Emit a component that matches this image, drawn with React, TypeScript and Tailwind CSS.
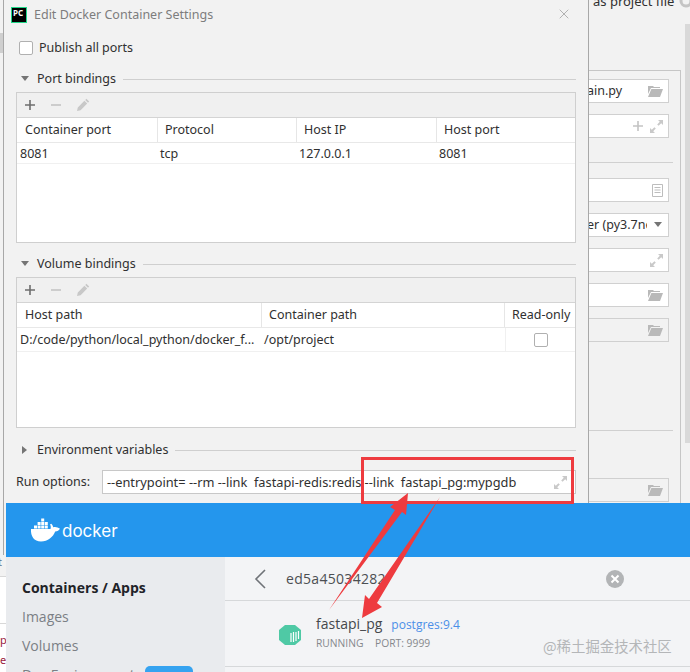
import React from 'react'
import { X } from 'lucide-react'

const PlusIcon = ({ color = '#6e6e6e' }: { color?: string }) => (
    <svg width="12" height="12" viewBox="0 0 12 12"><path d="M1 6h10M6 1v10" stroke={color} strokeWidth="1.6" /></svg>
)

const Toolbar = () => (
    <div className="h-[25px] bg-[#f0f0f0] border-b border-[#d4d4d4] flex items-center pl-[7px] gap-[14px] shrink-0">
        <PlusIcon />
        <svg width="12" height="12" viewBox="0 0 12 12"><path d="M1 6h10" stroke="#c4c4c4" strokeWidth="1.6" /></svg>
        <svg width="14" height="14" viewBox="0 0 14 14"><path d="M1 13l.8-3.6 6.6-6.6 2.8 2.8-6.6 6.6zM9.2 2l1.2-1.2 2.8 2.8L12 4.8z" fill="#c8c8c8" /></svg>
    </div>
)

const HeaderCell = ({ label, width }: { label: string; width?: string }) => (
    <div className={`${width} h-full flex items-center pl-[7px] first:pl-[8px] border-r border-[#e6e6e6] last:border-r-0`}>{label}</div>
)

const Section = ({ label, open = true }: { label: string; open?: boolean }) => (
    <div className="flex items-center h-[16px]">
        {open ? (
            <svg width="10" height="6" viewBox="0 0 10 6" className="ml-[16px] mr-[7px]"><path d="M1 0h8L5 5z" fill="#757575" /></svg>
        ) : (
            <svg width="6" height="10" viewBox="0 0 6 10" className="ml-[18px] mr-[9px]"><path d="M0 1v8l5-4z" fill="#757575" /></svg>
        )}
        <span className="whitespace-nowrap">{label}</span>
        <div className="flex-1 h-px bg-[#cfcfcf] ml-[7px] mr-[12px]" />
    </div>
)

const Folder = () => (
    <svg width="15" height="12" viewBox="0 0 15 12"><path d="M0 1h5l1 1h6v1H3L0 9zM3.4 4H15l-3 8H0z" fill="#b9b9b9" /></svg>
)

const Expand = ({ color = '#c9c9c9' }: { color?: string }) => (
    <svg width="13" height="13" viewBox="0 0 13 13">
        <path d="M8 0h5v5l-1.800-1.800L8.600 5.800 7.200 4.400l2.600-2.600zM5 13H0V8l1.800 1.800 2.600-2.600 1.400 1.400-2.600 2.600z" fill={color} />
    </svg>
)

const Field = ({ children, text, top, plain }: { children?: React.ReactNode; text?: string; top: string; plain?: boolean }) => (
    <div className={`${top} ${plain ? '' : 'bg-white'} h-[24px] w-[80px] border border-l-0 border-[#d0d0d0] flex items-center justify-end pr-[5px] gap-[6px] relative overflow-hidden`}>
        {text && <span className="mr-auto -ml-[2px] whitespace-nowrap">{text}</span>}
        {children}
    </div>
)

const RightPanel = () => (
    <div className="flex-1 flex overflow-hidden">
        <div className="w-[92px] flex flex-col shrink-0">
            <div className="h-[70px] pl-[4px] -mt-[8px] whitespace-nowrap text-[13px] leading-[18px] flex items-start">
                as project file
                <svg width="14" height="14" viewBox="0 0 14 14" className="ml-[5px] mt-[2px] shrink-0">
                    <circle cx="7" cy="7" r="5" fill="none" stroke="#c4c4c4" strokeWidth="3" />
                </svg>
            </div>
            <div className="flex-1 mt-[8px] border-t border-r border-[#c6c6c6] flex flex-col">
                <Field text="ain.py" top="mt-[8px]"><Folder /></Field>
                <Field top="mt-[11px]">
                    <PlusIcon color="#c4c4c4" />
                    <Expand />
                </Field>
                <div className="mt-[24px] h-px bg-[#d0d0d0] w-[84px]" />
                <Field top="mt-[15px]">
                    <svg width="11" height="13" viewBox="0 0 11 13">
                        <path d="M.5.5h10v12H.5zM2.500 3.500h6M2.500 6h6M2.500 8.500h6" fill="none" stroke="#bdbdbd" />
                    </svg>
                </Field>
                <Field text="er (py3.7ne" top="mt-[11px]">
                    <span className="absolute right-0 top-0 bottom-0 w-[21px] bg-white flex items-center justify-center">
                        <svg width="10" height="6" viewBox="0 0 10 6"><path d="M1 0h8L5 5z" fill="#757575" /></svg>
                    </span>
                </Field>
                <Field top="mt-[11px]"><Expand /></Field>
                <Field top="mt-[11px]"><Folder /></Field>
                <Field top="mt-[11px]" plain><Folder /></Field>
                <div className="mt-[88px] h-px bg-[#d0d0d0] w-[84px]" />
                <Field top="mt-[47px]" plain><Folder /></Field>
            </div>
        </div>
        <div className="w-[5px] ml-[4px] mt-[24px] h-[419px] bg-[#d9d9d9]" />
    </div>
)

const Dialog = () => (
    <div className="w-[586px] shrink-0 border-x border-[#a8a8a8] bg-[#f2f2f2] flex flex-col pl-[12px]">
        <div className="h-[30px] flex items-center -ml-[5px] shrink-0">
            <div className="w-[16px] h-[16px] bg-black border border-[#21d789] text-white text-[8px] leading-[9px] font-bold pl-[1px]">PC</div>
            <span className="ml-[7px] text-[#7d7d7d] whitespace-nowrap">Edit Docker Container Settings</span>
            <X size={16} strokeWidth={1} color="#8f8f8f" className="ml-auto mr-[16px] -mt-[2px]" />
        </div>
        <div className="flex items-center h-[18px] mt-[9px] shrink-0">
            <div className="w-[14px] h-[14px] bg-white border border-[#b0b0b0] rounded-[2px] ml-[3px] mr-[6px]" />
            <span>Publish all ports</span>
        </div>
        <div className="mt-[14px] -ml-[12px]"><Section label="Port bindings" /></div>
        <div className="mt-[5px] h-[151px] w-[560px] border border-[#cfcfcf] bg-white flex flex-col shrink-0">
            <Toolbar />
            <div className="h-[25px] flex items-center border-b border-[#e8e8e8] shrink-0">
                <HeaderCell label="Container port" width="w-[141px]" />
                <HeaderCell label="Protocol" width="w-[139px]" />
                <HeaderCell label="Host IP" width="w-[140px]" />
                <HeaderCell label="Host port" width="flex-1" />
            </div>
            <div className="h-[21px] pt-[1px] flex items-center border-b border-[#f0f0f0] shrink-0">
                <div className="w-[143px] pl-[3px]">8081</div>
                <div className="w-[139px]">tcp</div>
                <div className="w-[140px]">127.0.0.1</div>
                <div>8081</div>
            </div>
        </div>
        <div className="mt-[13px] -ml-[12px]"><Section label="Volume bindings" /></div>
        <div className="mt-[5px] h-[151px] w-[560px] border border-[#cfcfcf] bg-white flex flex-col shrink-0">
            <Toolbar />
            <div className="h-[25px] flex items-center border-b border-[#e8e8e8] shrink-0">
                <HeaderCell label="Host path" width="w-[245px]" />
                <HeaderCell label="Container path" width="w-[243px]" />
                <HeaderCell label="Read-only" width="flex-1" />
            </div>
            <div className="h-[24px] flex items-center border-b border-[#f0f0f0] shrink-0">
                <div className="w-[247px] pl-[3px] whitespace-nowrap overflow-hidden">D:/code/python/local_python/docker_f...</div>
                <div className="w-[241px]">/opt/project</div>
                <div className="flex-1 h-full flex items-center justify-center border-l border-[#f0f0f0]">
                    <div className="w-[14px] h-[14px] bg-white border border-[#b0b0b0] rounded-[2px]" />
                </div>
            </div>
        </div>
        <div className="mt-[14px] -ml-[12px]"><Section label="Environment variables" open={false} /></div>
        <div className="mt-[12px] flex items-center shrink-0">
            <span className="w-[86px]">Run options:</span>
            <div className="w-[474px] h-[24px] bg-white border border-[#c8c8c8] flex items-center pl-[4px] pr-[8px]">
                <span className="whitespace-pre text-[12.8px]">--entrypoint= --rm --link  fastapi-redis:redis --link  fastapi_pg:mypgdb</span>
                <span className="ml-auto"><Expand /></span>
            </div>
        </div>
    </div>
)

const DockerWindow = () => (
    <div className="flex-1 flex flex-col font-['Open_Sans',sans-serif]">
        <div className="h-[54px] bg-[#2496ed] flex items-center pl-[24px] text-white shrink-0">
            <svg width="31" height="24" viewBox="0 0 31 24" fill="white">
                <path d="M1 11h19.500c.6-2 .2-3.500-.5-4.500l1.200-.8c1.200 1 1.900 2.300 2 3.600 1.500-.5 3-.4 4.300.3.800.3 1.500.7 2.500 1.200-1 1.700-2.600 2.500-4.800 2.700C23 19 18 23.500 11 23.500 4 23.500.5 18 1 11z" />
                <path d="M4 7.500h3v3H4zM7.600 7.500h3v3h-3zM11.200 7.500h3v3h-3zM14.800 7.500h3v3h-3zM7.600 4h3v3h-3zM11.200 4h3v3h-3zM14.800 4h3v3h-3zM11.200.5h3v3h-3z" />
            </svg>
            <span className="ml-[1px] mt-[2px] text-[17px] leading-none font-['Inter',sans-serif]">docker</span>
        </div>
        <div className="flex-1 flex overflow-hidden">
            <div className="w-[219px] bg-[#e9ebee] pl-[16px] pt-[21px] shrink-0 text-[14px] text-[#7b7f85] leading-[20px]">
                <div className="font-bold text-[#1f2328]">Containers / Apps</div>
                <div className="mt-[9px]">Images</div>
                <div className="mt-[9px]">Volumes</div>
                <div className="mt-[9px] flex items-center whitespace-nowrap">
                    Dev Environments
                    <span className="ml-[4px] w-[48px] h-[18px] rounded-[5px] bg-[#36a3f0]" />
                </div>
            </div>
            <div className="flex-1 bg-[#f3f4f6] flex flex-col">
                <div className="h-[44px] border-b border-[#d6d8da] flex items-center pl-[29px] pr-[66px] shrink-0">
                    <svg width="12" height="20" viewBox="0 0 12 20"><path d="M11 1L2 10l9 9" fill="none" stroke="#6f7378" strokeWidth="1.6" /></svg>
                    <span className="ml-[20px] text-[14px] text-[#4c4f53] tracking-[0.3px]">ed5a45034282</span>
                    <svg width="18" height="18" viewBox="0 0 18 18" className="ml-auto">
                        <circle cx="9" cy="9" r="9" fill="#b2b4b6" />
                        <path d="M5.500 5.500l7 7M12.500 5.500l-7 7" stroke="white" strokeWidth="2" />
                    </svg>
                </div>
                <div className="h-[66px] border-b border-[#d6d8da] flex items-center pl-[54px] shrink-0">
                    <svg width="22" height="20" viewBox="0 0 22 20" className="mt-[3px]">
                        <path d="M6 0h10l6 5v10l-6 5H6l-6-5V5z" fill="#4fc9a5" />
                        <path d="M12 8v9M14.500 7v10M17 7v9M19.500 6v8" stroke="white" strokeWidth="1.200" />
                    </svg>
                    <div className="ml-[15px] -mt-[4px]">
                        <div className="flex items-baseline leading-[20px]">
                            <span className="text-[14px] text-[#45484c]">fastapi_pg</span>
                            <span className="ml-[9px] text-[12px] text-[#4b8fe8]">postgres:9.4</span>
                        </div>
                        <div className="text-[10.3px] leading-[14px] text-[#85888c] mt-[1px] whitespace-pre flex">
                            <span className="w-[59px]">RUNNING</span>
                            <span>PORT: 9999</span>
                        </div>
                    </div>
                </div>
            </div>
        </div>
    </div>
)

export default function App() {
    return (
        <div className="relative w-[690px] h-[672px] overflow-hidden bg-[#f2f2f2] flex flex-col text-[12.5px] leading-[18px] text-[#303030] font-['Noto_Sans','Noto_Sans_CJK_SC',sans-serif]">
            <div className="h-[503px] flex shrink-0 overflow-hidden">
                <div className="w-[3px] shrink-0 pt-[33px]"><div className="h-[20px] bg-[#cfcfcf]" /></div>
                <Dialog />
                <RightPanel />
            </div>
            <div className="flex-1 flex overflow-hidden">
                <div className="w-[6px] shrink-0 flex flex-col text-[11px] leading-[14px] overflow-hidden">
                    <div className="h-[52px] w-[4px] border-r border-[#a8a8a8]" />
                    <div className="h-[21px] -ml-[2px] text-[#55708a]">t</div>
                    <div className="h-[47px] bg-white border-t border-[#d8d8d8]" />
                    <div className="flex-1 bg-white border-t border-[#d8d8d8] text-[#9a2040] pt-[9px]">
                        <div>p</div>
                        <div className="mt-[6px] whitespace-nowrap">ed</div>
                    </div>
                </div>
                <DockerWindow />
            </div>

            {/* red annotations drawn over the screenshot */}
            <div className="absolute left-[361px] top-[457px] w-[213px] h-[47px] border-[3px] border-[#ee3b3f]" />
            <svg className="absolute inset-0" width="690" height="672" viewBox="0 0 690 672">
                <polygon points="329,610 395,510 390,507 408,493 406,515 402,512" fill="#ee3b3f" />
                <polygon points="440,497 377,603 382,607 362,618 365,595 369,599" fill="#ee3b3f" />
            </svg>
            <div className="absolute left-[543px] top-[636px] text-[14.4px] leading-[20px] text-[#b4b6b8] font-['Noto_Sans_CJK_SC',sans-serif] whitespace-nowrap">@稀土掘金技术社区</div>
        </div>
    )
}
